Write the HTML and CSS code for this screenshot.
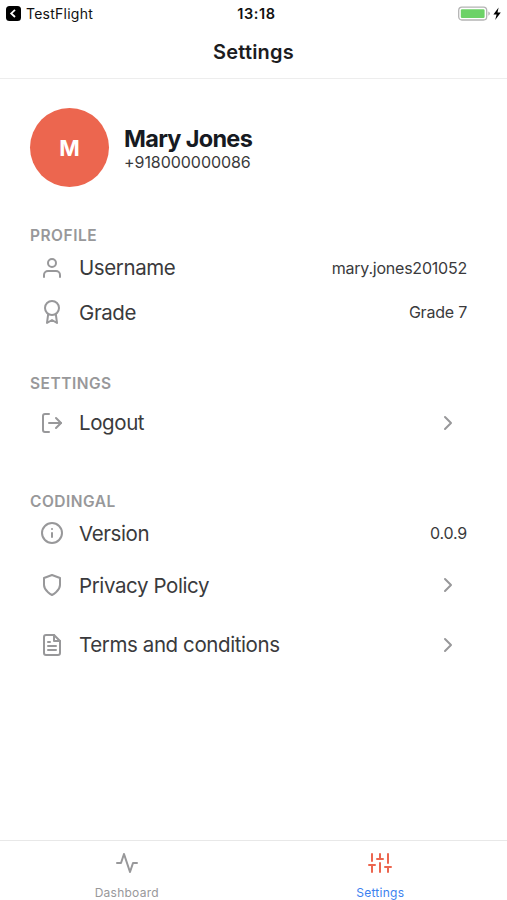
FILE: index.html
```html
<!DOCTYPE html>
<html lang="en">
<head>
    <meta charset="UTF-8">
    <meta name="viewport" content="width=device-width, initial-scale=1.0">
    <title>Settings</title>
    <link rel="stylesheet" href="styles.css">
</head>
<body>
    <div class="status-bar">
        <div class="back-app">
            <svg width="15" height="15" viewBox="0 0 15 15">
                <rect width="15" height="15" rx="3.5" fill="#000"/>
                <path d="M9 3.8 5.2 7.4 9 11" fill="none" stroke="#fff" stroke-width="1.8"/>
            </svg>
            <span>TestFlight</span>
        </div>
        <div class="time">13:18</div>
        <div class="battery">
            <svg width="44" height="16" viewBox="0 0 44 16">
                <rect x="0.7" y="1.2" width="28" height="12.8" rx="3.2" fill="#fff" stroke="#b4b4b4" stroke-width="1.3"/>
                <rect x="2.8" y="3.3" width="23.8" height="8.6" rx="1.2" fill="#6cd267"/>
                <path d="M30.3 5.5v4.2q1.6-.6 1.6-2.1t-1.6-2.1z" fill="#b4b4b4"/>
                <path d="M40.6 1.6 35.4 8.5h3.2l-1.4 5.5 5.6-7.4h-3.3z" fill="#000"/>
            </svg>
        </div>
    </div>

    <header class="nav-bar">
        <h1>Settings</h1>
    </header>

    <main>
        <div class="user">
            <div class="avatar">M</div>
            <div class="user-info">
                <h2>Mary Jones</h2>
                <p>+918000000086</p>
            </div>
        </div>

        <section>
            <h3>PROFILE</h3>
            <div class="row">
                <svg class="icon" viewBox="0 0 24 24"><path d="M20 21v-2a4 4 0 0 0-4-4H8a4 4 0 0 0-4 4v2"/><circle cx="12" cy="7" r="4"/></svg>
                <span class="label">Username</span>
                <span class="value">mary.jones201052</span>
            </div>
            <div class="row">
                <svg class="icon" viewBox="0 0 24 24"><circle cx="12" cy="8" r="7"/><path d="M8.21 13.89 7 23l5-3 5 3-1.21-9.12"/></svg>
                <span class="label">Grade</span>
                <span class="value">Grade 7</span>
            </div>
        </section>

        <section>
            <h3>SETTINGS</h3>
            <div class="row link">
                <svg class="icon" viewBox="0 0 24 24"><path d="M9 21H5a2 2 0 0 1-2-2V5a2 2 0 0 1 2-2h4"/><path d="m16 17 5-5-5-5"/><path d="M21 12H9"/></svg>
                <span class="label">Logout</span>
                <svg class="chevron" viewBox="0 0 24 24"><path d="m9 18 6-6-6-6"/></svg>
            </div>
        </section>

        <section>
            <h3>CODINGAL</h3>
            <div class="row">
                <svg class="icon" viewBox="0 0 24 24"><circle cx="12" cy="12" r="10"/><path d="M12 16v-4M12 8h.01"/></svg>
                <span class="label">Version</span>
                <span class="value">0.0.9</span>
            </div>
            <div class="row link">
                <svg class="icon" viewBox="0 0 24 24"><path d="M12 22s8-4 8-10V5l-8-3-8 3v7c0 6 8 10 8 10z"/></svg>
                <span class="label">Privacy Policy</span>
                <svg class="chevron" viewBox="0 0 24 24"><path d="m9 18 6-6-6-6"/></svg>
            </div>
            <div class="row link">
                <svg class="icon" viewBox="0 0 24 24"><path d="M14 2H6a2 2 0 0 0-2 2v16a2 2 0 0 0 2 2h12a2 2 0 0 0 2-2V8z"/><path d="M14 2v6h6M16 13H8M16 17H8M10 9H8"/></svg>
                <span class="label">Terms and conditions</span>
                <svg class="chevron" viewBox="0 0 24 24"><path d="m9 18 6-6-6-6"/></svg>
            </div>
        </section>
    </main>

    <nav class="tab-bar">
        <div class="tab">
            <svg viewBox="0 0 24 24"><path d="M22 12h-4l-3 9L9 3l-3 9H2"/></svg>
            <span>Dashboard</span>
        </div>
        <div class="tab active">
            <svg viewBox="0 0 24 24"><path d="M4 21v-7M4 10V3M12 21v-9M12 8V3M20 21v-5M20 12V3M1 14h6M9 8h6M17 16h6"/></svg>
            <span>Settings</span>
        </div>
    </nav>
</body>
</html>
```

FILE: styles.css
```css
* {
    box-sizing: border-box;
}
body {
    margin: 0;
    height: 900px;
    display: flex;
    flex-direction: column;
    background-color: #fff;
    font-family: Inter, Roboto, sans-serif;
    color: #3a3a3c;
    overflow: hidden;
}
h1, h2, h3, p {
    margin: 0;
}
svg {
    flex: none;
    display: block;
}
.status-bar {
    height: 27px;
    padding: 0 5px 0 6px;
    display: grid;
    grid-template-columns: 1fr auto 1fr;
    align-items: center;
    color: #111;
}
.back-app {
    display: flex;
    align-items: center;
    gap: 5px;
    font-size: 14px;
    letter-spacing: 0.25px;
}
.time {
    padding-left: 5px;
    font-size: 14.5px;
    font-weight: 600;
    letter-spacing: 0.6px;
}
.battery {
    justify-self: end;
}
.nav-bar {
    height: 52px;
    border-bottom: 1px solid #ededed;
    text-align: center;
}
h1 {
    font-size: 20px;
    line-height: 50px;
    font-weight: 600;
    letter-spacing: 0.2px;
    color: #1c1c1e;
}
main {
    flex: 1;
    padding: 29px 40px 0 30px;
}
.user {
    display: flex;
    align-items: center;
    gap: 15px;
    height: 79px;
    margin-bottom: 39px;
}
.avatar {
    width: 79px;
    height: 79px;
    border-radius: 50%;
    background-color: #ec664f;
    color: #fff;
    font-size: 22px;
    font-weight: 700;
    line-height: 80px;
    text-align: center;
}
.user-info {
    padding-top: 3px;
}
h2 {
    font-size: 23.5px;
    line-height: 26px;
    font-weight: 700;
    letter-spacing: -0.7px;
    color: #161a22;
}
.user-info p {
    font-size: 16px;
    line-height: 21px;
    letter-spacing: -0.05px;
}
section {
    margin-bottom: 39px;
}
h3 {
    font-size: 15.5px;
    line-height: 19.5px;
    font-weight: 600;
    letter-spacing: 0.5px;
    color: #98989a;
}
.row {
    height: 44.5px;
    display: flex;
    align-items: center;
    padding-left: 10px;
}
.row.link {
    height: 59.5px;
    padding-right: 7px;
}
.icon,
.chevron,
.tab svg {
    width: 24px;
    height: 24px;
    fill: none;
    stroke: #98989a;
    stroke-width: 2;
    stroke-linecap: round;
    stroke-linejoin: round;
}
.label {
    flex: 1;
    margin-left: 15px;
    font-size: 20.5px;
    letter-spacing: -0.4px;
    white-space: nowrap;
}
.value {
    font-size: 16px;
    letter-spacing: -0.22px;
}
.tab-bar {
    height: 60px;
    display: flex;
    border-top: 1px solid #e8e8e8;
}
.tab {
    flex: 1;
    display: flex;
    flex-direction: column;
    align-items: center;
    padding-top: 10px;
    font-size: 12px;
    letter-spacing: 0.25px;
    color: #98989a;
}
.tab span {
    margin-top: 10px;
    line-height: 15px;
}
.tab.active {
    color: #3c82f0;
}
.tab.active svg {
    stroke: #ec664f;
}
```
